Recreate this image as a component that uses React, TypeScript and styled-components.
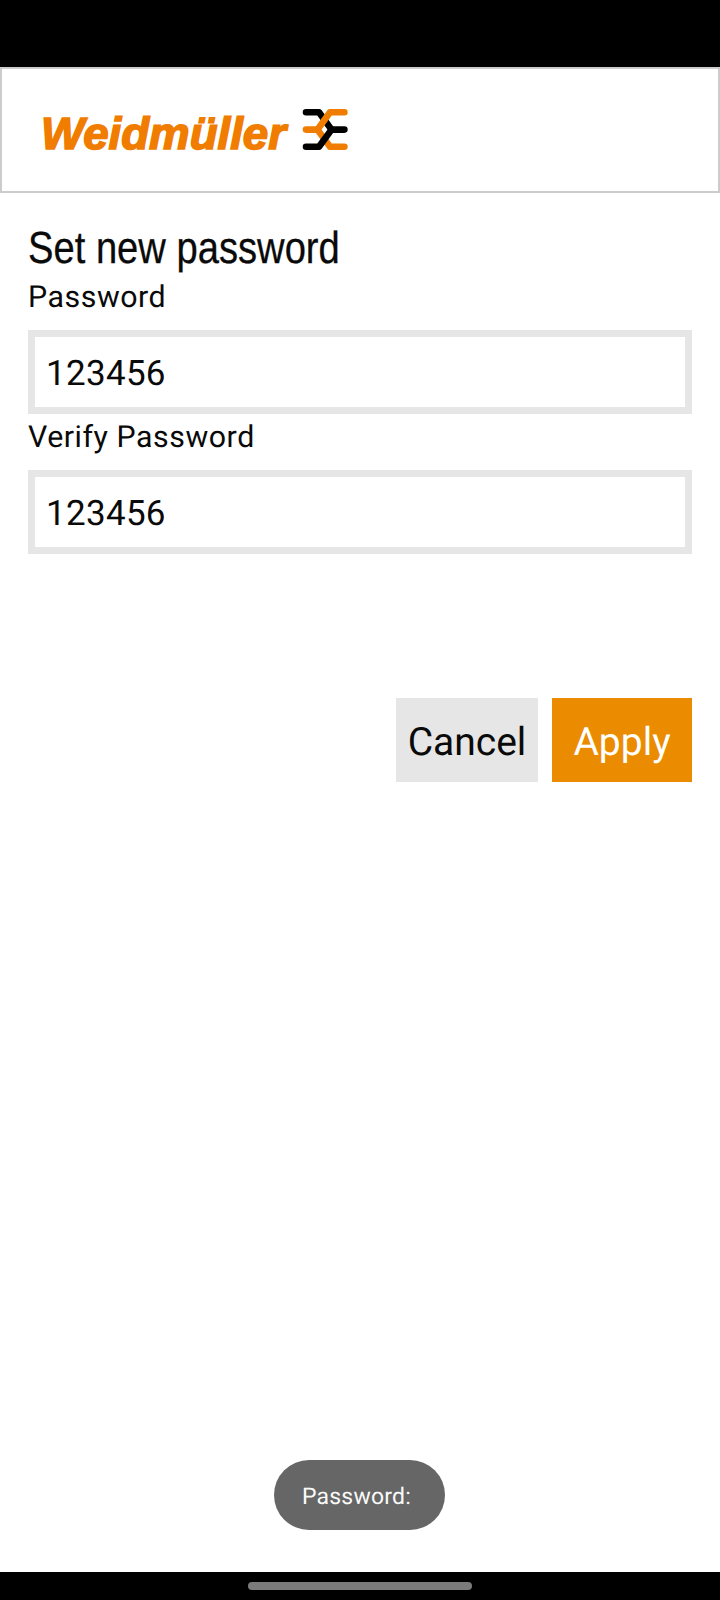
import React, { useState } from "react";
import styled, { createGlobalStyle } from "styled-components";

const GlobalStyle = createGlobalStyle`
  * { box-sizing: border-box; }
  body { margin: 0; background: #fff; }
`;

const Screen = styled.div`
  position: relative;
  display: flex;
  flex-direction: column;
  width: 720px;
  height: 1600px;
  background: #fff;
  color: #0a0a0a;
  font-family: Roboto, sans-serif;
  text-rendering: geometricPrecision;
  overflow: hidden;
`;

const StatusBar = styled.div`
  flex: none;
  height: 67px;
  background: #000;
`;

const Header = styled.header`
  flex: none;
  height: 126px;
  padding: 38px 38px 0;
  border: 2px solid #ccc;
`;

const LogoSvg = styled.svg`
  display: block;
  width: 312px;
  height: 46px;
  overflow: visible;
`;

const Form = styled.form`
  flex: 1;
  padding: 28px 28px 0;
`;

const Title = styled.h1`
  margin: 0;
  height: 55px;
  width: max-content;
  font: 400 45px/53px "Liberation Sans Narrow", "Liberation Sans", sans-serif;
  transform: scaleX(0.848);
  transform-origin: 0 0;
  -webkit-text-stroke: 0.3px #0a0a0a;
  white-space: nowrap;
`;

const Field = styled.label`
  display: block;
  height: 140px;
`;

const LabelText = styled.span`
  display: block;
  height: 54px;
  padding-top: 4px;
  font-size: 30.3px;
  line-height: 36px;
  letter-spacing: 0.55px;
`;

const Input = styled.input`
  display: block;
  width: 100%;
  height: 84px;
  padding: 2px 12px 0 11px;
  border: 7px solid #e6e6e6;
  border-radius: 0;
  outline: none;
  background: #fff;
  color: #0a0a0a;
  font: 400 35px/40px Roboto, sans-serif;
  letter-spacing: 0.3px;
  text-rendering: inherit;
`;

const Actions = styled.div`
  display: flex;
  justify-content: flex-end;
  gap: 14px;
  margin-top: 142px;
`;

const Button = styled.button<{ $primary?: boolean }>`
  width: ${(p) => (p.$primary ? 140 : 142)}px;
  height: 84px;
  padding: 3px 0 0;
  border: 0;
  background: ${(p) => (p.$primary ? "#eb8c00" : "#e6e6e6")};
  color: ${(p) => (p.$primary ? "#fff" : "#0a0a0a")};
  font: 400 39px/46px Roboto, sans-serif;
  text-rendering: inherit;
`;

const Toast = styled.div`
  position: absolute;
  left: 274px;
  top: 1460px;
  width: 171px;
  height: 70px;
  padding-left: 28px;
  border-radius: 35px;
  background: #666;
  color: #fafafa;
  font-size: 23px;
  line-height: 73px;
  letter-spacing: 0.2px;
`;

const NavBar = styled.div`
  flex: none;
  display: flex;
  align-items: center;
  justify-content: center;
  height: 28px;
  background: #000;
`;

const NavHandle = styled.div`
  width: 224px;
  height: 8px;
  border-radius: 4px;
  background: #7b7b7b;
`;

function Logo() {
  return (
    <LogoSvg viewBox="0 0 312 46" role="img" aria-label="Weidmüller">
      <text
        x="1"
        y="42"
        fill="#f07d00"
        stroke="#f07d00"
        strokeWidth="1.6"
        fontFamily="Liberation Sans, sans-serif"
        fontWeight="700"
        fontStyle="italic"
        fontSize="45"
        textLength="245"
        lengthAdjust="spacingAndGlyphs"
      >
        Weidmüller
      </text>
      <g fill="none" strokeWidth="6.6" strokeLinecap="round" strokeLinejoin="round">
        <path stroke="#f07d00" d="M266 22.6H277.5L290 39.7H304.4" />
        <path stroke="#000" d="M266 5.3H279L291.5 22.6" />
        <path stroke="#f07d00" d="M304.4 5.3H290L277.5 22.6" />
        <path stroke="#000" d="M304.4 22.6H291.5L279 39.7H266" />
      </g>
    </LogoSvg>
  );
}

export default function App() {
  const [password, setPassword] = useState("123456");
  const [verify, setVerify] = useState("123456");
  return (
    <Screen>
      <GlobalStyle />
      <StatusBar />
      <Header>
        <Logo />
      </Header>
      <Form>
        <Title>Set new password</Title>
        <Field>
          <LabelText>Password</LabelText>
          <Input value={password} onChange={(e) => setPassword(e.target.value)} />
        </Field>
        <Field>
          <LabelText>Verify Password</LabelText>
          <Input value={verify} onChange={(e) => setVerify(e.target.value)} />
        </Field>
        <Actions>
          <Button type="button">Cancel</Button>
          <Button type="button" $primary>Apply</Button>
        </Actions>
      </Form>
      <Toast>Password:</Toast>
      <NavBar>
        <NavHandle />
      </NavBar>
    </Screen>
  );
}
